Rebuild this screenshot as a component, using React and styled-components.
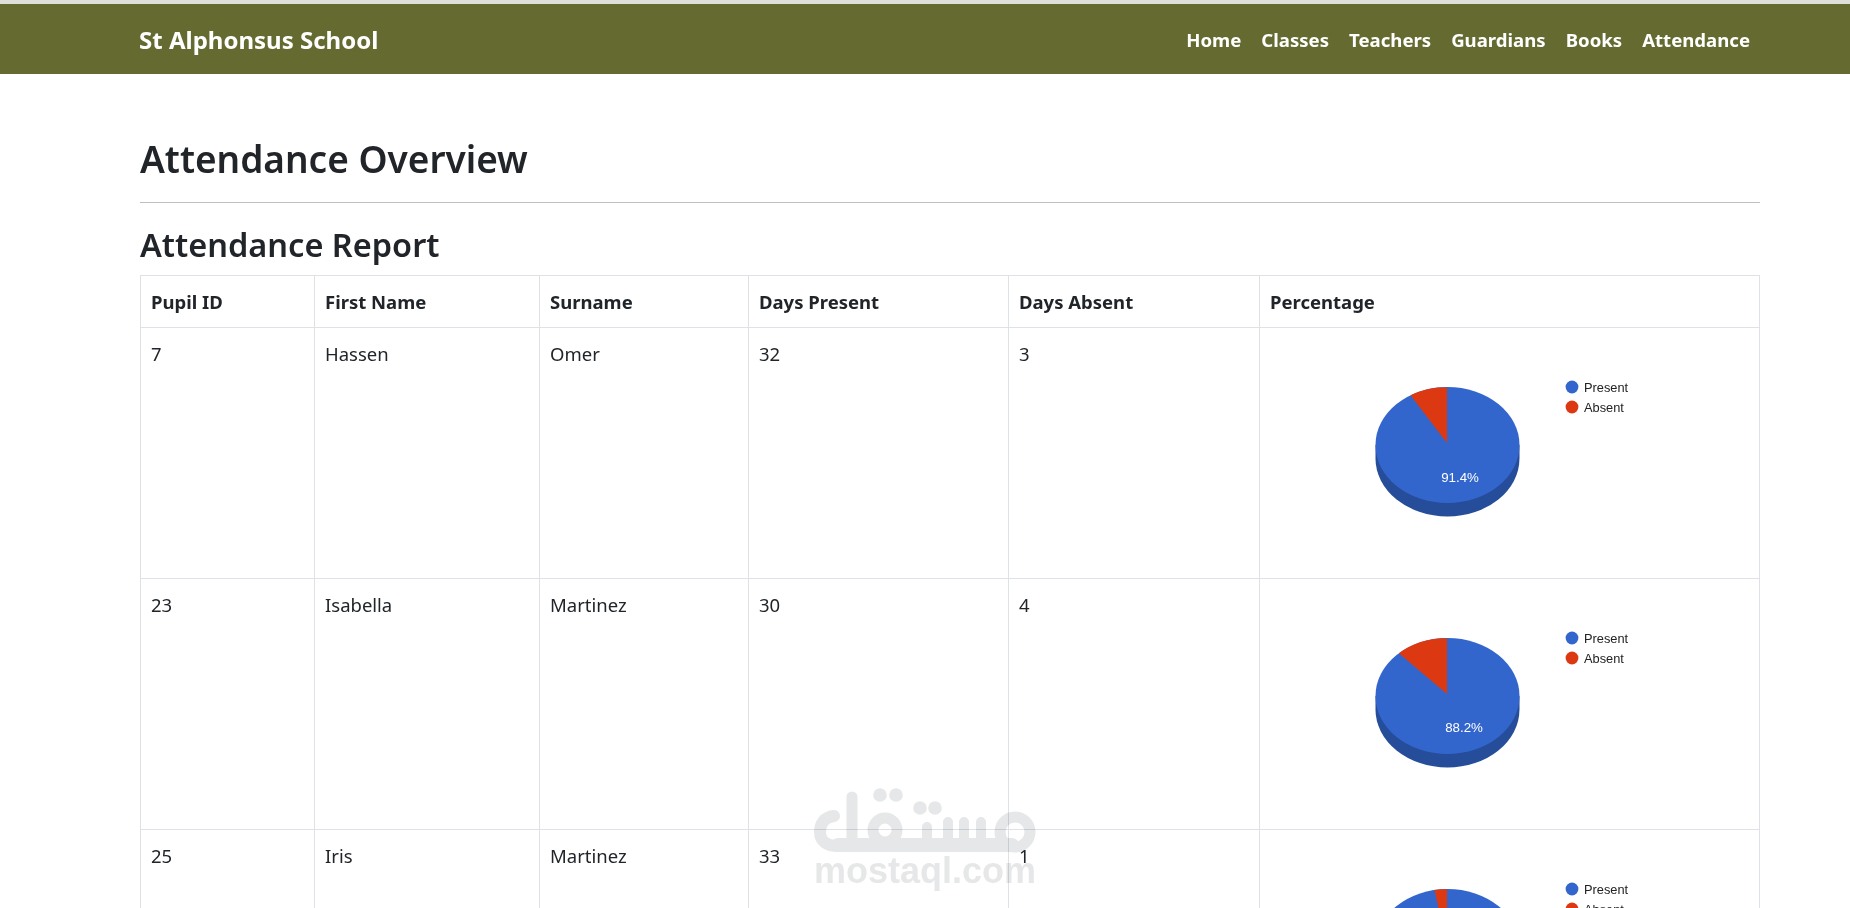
import React from "react";
import styled, { createGlobalStyle } from "styled-components";

const Global = createGlobalStyle`
  html, body { margin: 0; padding: 0; background: #fff; overflow: hidden; height: 908px; }
  body { font-family: "Noto Sans", "Liberation Sans", sans-serif; color: #212529; }
`;

const Page = styled.div`
  position: relative;
  width: 1850px;
  height: 908px;
  overflow: hidden;
  border-top: 4px solid #dddfd8;
  box-sizing: border-box;
`;

const NavBar = styled.nav`
  display: flex;
  align-items: center;
  justify-content: space-between;
  height: 70px;
  padding: 0 100px 0 139px;
  background: #656b30;
`;

const Brand = styled.a`
  color: #fff;
  font-size: 24px;
  font-weight: 700;
`;

const NavLinks = styled.ul`
  display: flex;
  gap: 20px;
  margin: 0;
  padding: 0;
  list-style: none;
`;

const NavLink = styled.li`
  color: #fff;
  font-size: 18.6px;
  font-weight: 700;
`;

const Main = styled.main`
  padding: 0 90px 0 140px;
`;

const Title = styled.h1`
  margin: 0;
  padding: 59px 0 17px;
  font-size: 37px;
  line-height: 52px;
  font-weight: 600;
  border-bottom: 1px solid #bfbfc2;
`;

const Subtitle = styled.h2`
  margin: 0;
  padding: 18px 0 6px;
  font-size: 32.5px;
  line-height: 48px;
  font-weight: 600;
`;

const Table = styled.table`
  width: 1619px;
  border-collapse: collapse;
  table-layout: fixed;
  font-size: 18.5px;
`;

const HeadCell = styled.th`
  height: 52px;
  padding: 0 10px;
  border: 1px solid #dee2e6;
  font-weight: 700;
  text-align: left;
  box-sizing: border-box;
`;

const Cell = styled.td`
  height: 251px;
  padding: 12px 10px;
  border: 1px solid #dee2e6;
  vertical-align: top;
  line-height: 28px;
  box-sizing: border-box;
`;

const ChartCell = styled(Cell)`
  padding: 0;
`;

const ChartSvg = styled.svg`
  display: block;
`;

const Watermark = styled.div`
  position: absolute;
  left: 813px;
  top: 780px;
  width: 224px;
  display: flex;
  flex-direction: column;
  mix-blend-mode: multiply;
`;

const WatermarkName = styled.span`
  font-family: "Liberation Sans", sans-serif;
  font-weight: 700;
  font-size: 36px;
  line-height: 30px;
  margin-left: 1px;
  color: #e6e7e8;
  white-space: nowrap;
`;

function Pie({ pct, labelX, labelY }) {
  const cx = 187.5, cy = 117, rx = 72, ry = 58, depth = 13.5, ax = 187, ay = 115;
  const a = (pct / 100) * 2 * Math.PI;
  const ex = cx + rx * Math.sin(a);
  const ey = cy - ry * Math.cos(a);
  return (
    <ChartSvg width="499" height="250" viewBox="0 0 499 250">
      <path
        d={`M${cx - rx} ${cy} v${depth} A${rx} ${ry} 0 0 0 ${cx + rx} ${cy + depth} v${-depth} Z`}
        fill="#264d99"
      />
      <ellipse cx={cx} cy={cy} rx={rx} ry={ry} fill="#3366cc" />
      <path
        d={`M${ax} ${ay} L${ex} ${ey} A${rx} ${ry} 0 0 1 ${cx} ${cy - ry} L${ax} ${cy - ry} Z`}
        fill="#dc3912"
      />
      <text x={labelX} y={labelY} textAnchor="middle" fontFamily="Liberation Sans" fontSize="13.3" fill="#fff">
        {pct.toFixed(1)}%
      </text>
      <circle cx="312" cy="59" r="6.4" fill="#3366cc" />
      <text x="324" y="63.5" fontFamily="Liberation Sans" fontSize="12.8" fill="#222">Present</text>
      <circle cx="312" cy="79" r="6.4" fill="#dc3912" />
      <text x="324" y="83.5" fontFamily="Liberation Sans" fontSize="12.8" fill="#222">Absent</text>
    </ChartSvg>
  );
}

function MostaqlLogo() {
  return (
    <svg width="224" height="72" viewBox="813 784 224 72">
      <g fill="none" stroke="#e6e7e8" strokeLinecap="round" strokeLinejoin="round">
        <path strokeWidth="12" d="M834 816 C824 817 820 824 820 832 C820 841 827 846 838 846 L860 846" />
        <path strokeWidth="11" d="M852 797 L852 846" />
        <path strokeWidth="14" d="M838 845 L1012 845" />
        <circle strokeWidth="11" cx="885" cy="830" r="12" />
        <circle strokeWidth="11" cx="1015" cy="832" r="15" />
        <path strokeWidth="10" d="M927 827 L927 845 M948 822 L948 845 M964 822 L964 845 M981 822 L981 845" />
      </g>
      <g fill="#e6e7e8">
        <circle cx="880" cy="795" r="6.8" />
        <circle cx="896" cy="795" r="6.8" />
        <circle cx="920" cy="808" r="6.8" />
        <circle cx="935" cy="808" r="6.8" />
      </g>
    </svg>
  );
}

const rows = [
  { id: 7, first: "Hassen", last: "Omer", present: 32, absent: 3, pct: 91.4, lx: 200, ly: 154 },
  { id: 23, first: "Isabella", last: "Martinez", present: 30, absent: 4, pct: 88.2, lx: 204, ly: 153 },
  { id: 25, first: "Iris", last: "Martinez", present: 33, absent: 1, pct: 97.1, lx: 190, ly: 154 },
];

const widths = [174, 225, 209, 260, 251, 500];
const heads = ["Pupil ID", "First Name", "Surname", "Days Present", "Days Absent", "Percentage"];

export default function App() {
  return (
    <Page>
      <Global />
      <NavBar>
        <Brand>St Alphonsus School</Brand>
        <NavLinks>
          {["Home", "Classes", "Teachers", "Guardians", "Books", "Attendance"].map((l) => (
            <NavLink key={l}>{l}</NavLink>
          ))}
        </NavLinks>
      </NavBar>
      <Main>
        <Title>Attendance Overview</Title>
        <Subtitle>Attendance Report</Subtitle>
        <Table>
          <colgroup>
            {widths.map((w, i) => <col key={i} width={w} />)}
          </colgroup>
          <thead>
            <tr>{heads.map((h) => <HeadCell key={h}>{h}</HeadCell>)}</tr>
          </thead>
          <tbody>
            {rows.map((r) => (
              <tr key={r.id}>
                <Cell>{r.id}</Cell>
                <Cell>{r.first}</Cell>
                <Cell>{r.last}</Cell>
                <Cell>{r.present}</Cell>
                <Cell>{r.absent}</Cell>
                <ChartCell><Pie pct={r.pct} labelX={r.lx} labelY={r.ly} /></ChartCell>
              </tr>
            ))}
          </tbody>
        </Table>
      </Main>
      <Watermark>
        <MostaqlLogo />
        <WatermarkName>mostaql.com</WatermarkName>
      </Watermark>
    </Page>
  );
}
